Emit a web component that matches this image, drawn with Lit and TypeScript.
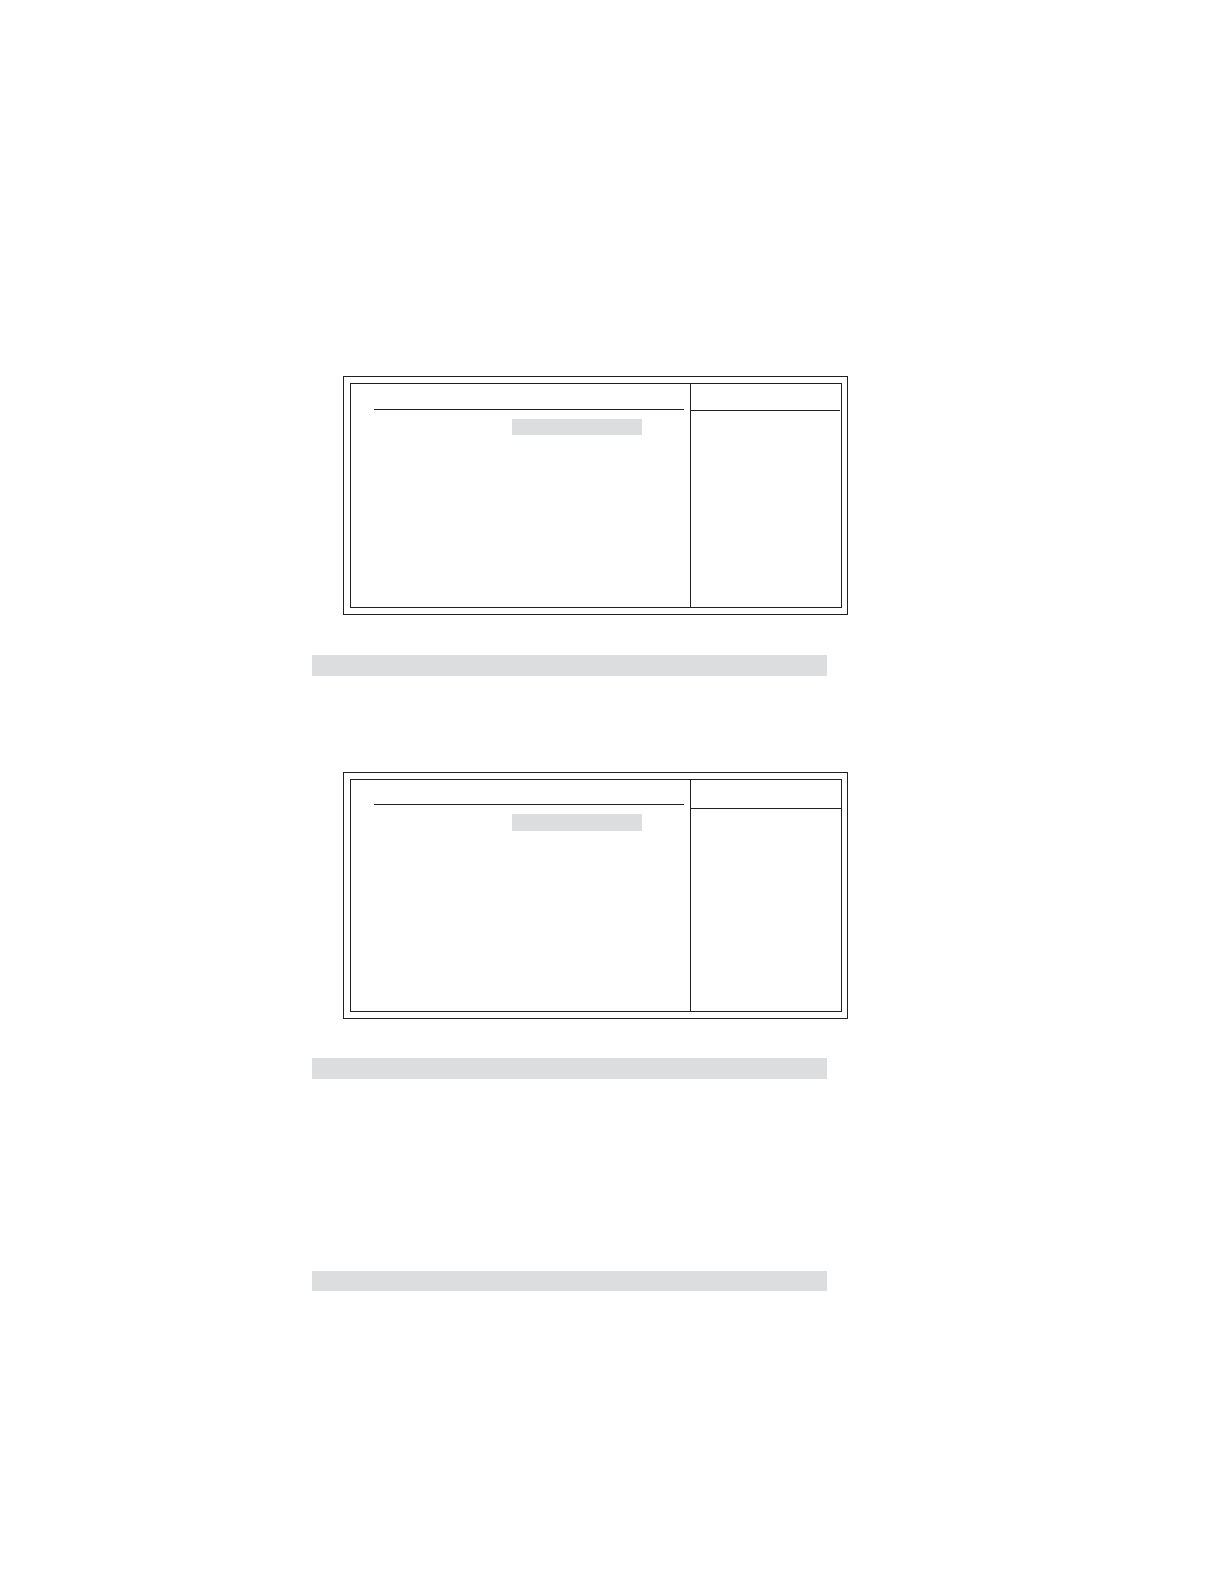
import { LitElement, html, css } from "lit";
import { customElement } from "lit/decorators.js";

/** Double-ruled setup screen: an options pane with a selected value, and a help pane. */
@customElement("setup-screen")
export class SetupScreen extends LitElement {
  static styles = css`
    :host {
      display: block;
      box-sizing: border-box;
      border: 1px solid #231f20;
      padding: 6px 5px 6px 6px;
      --options-header: 26px;
      --help-header: 27px;
      --help-inset: 1px;
      --value-height: 16px;
      --body-height: 223px;
    }
    :host([tall]) {
      --options-header: 25px;
      --help-header: 29px;
      --help-inset: 0px;
      --value-height: 17px;
      --body-height: 231px;
    }
    .frame {
      display: grid;
      grid-template-columns: minmax(0, 1fr) 151px;
      min-height: var(--body-height);
      border: 1px solid #231f20;
    }
    .options {
      display: flex;
      flex-direction: column;
      gap: 9px;
      padding: 0 6px 0 23px;
    }
    .options-header {
      box-sizing: border-box;
      height: var(--options-header);
      border-bottom: 1px solid #231f20;
    }
    .value {
      width: 130px;
      height: var(--value-height);
      margin-left: 138px;
      background: #dcddde;
    }
    .help {
      border-left: 1px solid #231f20;
    }
    .help-header {
      box-sizing: border-box;
      height: var(--help-header);
      margin-right: var(--help-inset);
      border-bottom: 1px solid #231f20;
    }
  `;

  render() {
    return html`
      <div class="frame">
        <div class="options">
          <div class="options-header"></div>
          <div class="value"></div>
        </div>
        <div class="help">
          <div class="help-header"></div>
        </div>
      </div>
    `;
  }
}

@customElement("app-root")
export class AppRoot extends LitElement {
  static styles = css`
    :host {
      display: block;
      box-sizing: border-box;
      min-height: 100vh;
      background: #ffffff;
      font-family: "Liberation Sans", sans-serif;
    }
    .page {
      display: grid;
      grid-template-columns: 312fr 515fr 397fr;
      padding-top: 376px;
    }
    .content {
      grid-column: 2;
      min-width: 0;
    }
    .screen {
      margin: 0 -21px 40px 31px;
    }
    .bar {
      height: 21px;
      background: #dcddde;
    }
    .bar + .screen {
      margin-top: 96px;
      margin-bottom: 39px;
    }
    .bar + .bar {
      height: 20px;
      margin-top: 192px;
    }
  `;

  render() {
    return html`
      <main class="page">
        <div class="content">
          <setup-screen class="screen"></setup-screen>
          <div class="bar"></div>
          <setup-screen class="screen" tall></setup-screen>
          <div class="bar"></div>
          <div class="bar"></div>
        </div>
      </main>
    `;
  }
}
